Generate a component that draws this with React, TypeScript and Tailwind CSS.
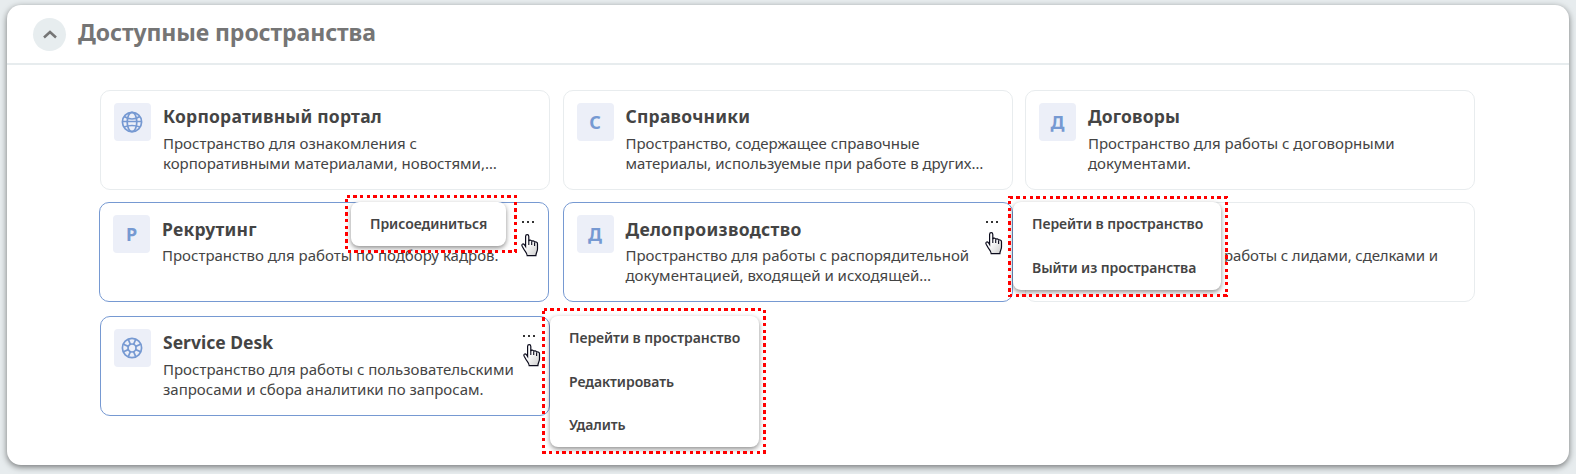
import type { ReactNode } from "react";

type Item = { label: string };
type Space = {
  title?: string;
  lines: string[];
  icon: ReactNode;
  active?: boolean;
  shift?: boolean;
  hand?: string;
  textClass?: string;
  titleClass?: string;
};

const Globe = () => (
  <svg width="22" height="22" viewBox="0 0 22 22" fill="none" stroke="#7699d2" strokeWidth="1.7" className="-mt-px -ml-px">
    <circle cx="11" cy="11" r="9.6" />
    <ellipse cx="11" cy="11" rx="4.8" ry="9.6" />
    <path d="M3.200 5.500q7.800 5 15.600 0M1.500 10.500h19M3 16q8-3 16 0" />
  </svg>
);

const Ring = () => (
  <svg width="22" height="22" viewBox="0 0 22 22" fill="none" stroke="#7699d2" strokeWidth="1.700" className="-mt-px -ml-px">
    <circle cx="11" cy="11" r="9.600" />
    <circle cx="11" cy="11" r="4" />
    <path d="M9.400 7.300L7.300 2.300M12.600 7.300l2.100-5M9.400 14.700l-2.100 5M12.600 14.700l2.100 5M7.300 9.400L2.300 7.300M7.300 12.600l-5 2.100M14.700 9.400l5-2.100M14.700 12.600l5 2.100" />
  </svg>
);

const spaces: Space[] = [
  { title: "Корпоративный портал", lines: ["Пространство для ознакомления с", "корпоративными материалами, новостями,…"], icon: <Globe />, titleClass: "tracking-[0.22px]" },
  { title: "Справочники", lines: ["Пространство, содержащее справочные", "материалы, используемые при работе в других…"], icon: "С", titleClass: "tracking-[0.22px]" },
  { title: "Договоры", lines: ["Пространство для работы с договорными", "документами."], icon: "Д", titleClass: "tracking-[0.15px]" },
  { title: "Рекрутинг", lines: ["Пространство для работы по подбору кадров."], icon: "Р", active: true, shift: true, hand: "top-[31px] right-[9px]", titleClass: "pt-px tracking-[0.22px]" },
  { title: "Делопроизводство", lines: ["Пространство для работы с распорядительной", "документацией, входящей и исходящей…"], icon: "Д", active: true, hand: "top-[29px] right-[9px]", titleClass: "pt-px tracking-[0.3px]" },
  { lines: ["работы с лидами, сделками и"], icon: null, textClass: "pl-[136px] tracking-[-0.1px]" },
  { title: "Service Desk", lines: ["Пространство для работы с пользовательскими", "запросами и сбора аналитики по запросам."], icon: <Ring />, active: true, hand: "top-[27px] right-[8px]" },
];

function Hand({ place }: { place?: string }) {
  return (
    <svg width="18" height="23" viewBox="0 0 18 23" className={`absolute ${place}`}>
      <defs>
        <linearGradient id="palm" x1="0" y1="0" x2="1" y2="1">
          <stop offset="0.4" stopColor="#fff" />
          <stop offset="1" stopColor="#ccc" />
        </linearGradient>
      </defs>
      <path
        d="M4.600 12.500V2.500c0-2.400 3.200-2.400 3.200 0V7c.3-1.300 2.900-1 2.900.6.300-1.200 2.900-.8 2.900.8.400-1 2.900-.5 2.900 1.300V15c0 2.500-1.600 3.500-1.600 6.700H6.200C6.200 19 4 17.500 3 15.500L1.200 12.300c-1-2 .8-3.200 2.100-1.800z"
        fill="url(#palm)"
        stroke="#0b0b1c"
        strokeWidth="1.200"
      />
      <path d="M7.800 6.500V11M10.700 7.500V11M13.600 8.500V12" stroke="#0b0b1c" strokeWidth="1.100" />
    </svg>
  );
}

function Card({ space }: { space: Space }) {
  return (
    <article
      className={`relative flex h-[100px] rounded-[10px] border pl-[13px] pt-[12px] ${space.active ? "border-[#7699d2]" : "border-[#e8ecee]"} ${space.shift ? "-ml-px mr-px" : ""}`}
    >
      <div className={`flex h-[38px] w-[37px] shrink-0 items-center justify-center rounded-[4px] text-[18px] font-bold text-[#7699d2] ${space.icon ? "bg-[#eceff8]" : ""}`}>
        {space.icon}
      </div>
      <div className={`ml-[12px] whitespace-nowrap ${space.textClass ?? ""}`}>
        <h2 className={`h-[30px] text-[17.5px] leading-[27px] font-bold ${space.titleClass ?? ""}`}>{space.title}</h2>
        {space.lines.map((line) => (
          <p key={line} className="text-[15px] leading-[20px]">{line}</p>
        ))}
      </div>
      {space.active && (
        <>
          <div className="absolute top-[18px] right-[14px] flex gap-[3px]">
            <i className="size-[2px] bg-[#333]" />
            <i className="size-[2px] bg-[#333]" />
            <i className="size-[2px] bg-[#333]" />
          </div>
          <Hand place={space.hand} />
        </>
      )}
    </article>
  );
}

function Menu({ items, place, frame, width, height }: { items: Item[]; place: string; frame: string; width: number; height: number }) {
  return (
    <div className={`absolute ${place}`}>
      <ul className="flex h-full flex-col rounded-[8px] bg-white pl-[19px] text-[14px] font-[560] tracking-[-0.07px] whitespace-nowrap shadow-[0_2px_5px_rgba(0,0,0,0.45)]">
        {items.map((item) => (
          <li key={item.label} className="flex h-[43.8px] items-center pb-px">{item.label}</li>
        ))}
      </ul>
      <svg width={width} height={height} className={`absolute ${frame}`} shapeRendering="crispEdges">
        <rect x="1.5" y="1.5" width={width - 3} height={height - 3} fill="none" stroke="#f00" strokeWidth="3" strokeDasharray="3.4 3.3" />
      </svg>
    </div>
  );
}

export default function App() {
  return (
    <div className="h-[474px] bg-[#e7ecee] px-[7px] pt-[5px] font-['Noto_Sans',sans-serif] text-[#444]">
      <main className="relative h-[460px] w-[1562px] rounded-[14px] bg-white shadow-[0_2px_6px_rgba(0,0,0,0.5)]">
        <header className="flex h-[60px] items-center border-b-2 border-[#e7ecee] pl-[26px]">
          <button className="mt-px flex size-[33px] items-center justify-center rounded-full bg-[#e7edef]">
            <svg width="14" height="9" viewBox="0 0 14 9" fill="none" stroke="#757575" strokeWidth="2.500">
              <path d="M1 7.500l6-5.500 6 5.500" />
            </svg>
          </button>
          <h1 className="ml-[12px] pb-[3px] text-[23px] font-bold tracking-[-0.1px] text-[#757575]">Доступные пространства</h1>
        </header>
        <section className="grid grid-cols-[450px_450px_450px] grid-rows-[112px_114px_100px] gap-x-[12.5px] pt-[25px] pl-[93px]">
          {spaces.map((space, i) => (
            <Card key={i} space={space} />
          ))}
        </section>
        <Menu items={[{ label: "Присоединиться" }]} place="left-[344px] top-[197px] w-[155px] h-[44px]" frame="-top-[7px] -left-[6px]" width={172} height={58} />
        <Menu items={[{ label: "Перейти в пространство" }, { label: "Выйти из пространства" }]} place="left-[1006px] top-[197px] w-[208px] h-[88px]" frame="-top-[6px] -left-[5px]" width={220} height={101} />
        <Menu items={[{ label: "Перейти в пространство" }, { label: "Редактировать" }, { label: "Удалить" }]} place="left-[543px] top-[311px] w-[209px] h-[131px]" frame="-top-[8px] -left-[8px]" width={224} height={146} />
      </main>
    </div>
  );
}
